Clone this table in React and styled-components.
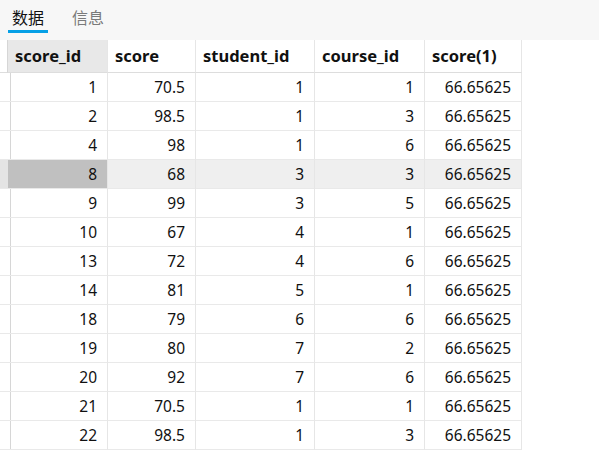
import React from "react";
import styled, { createGlobalStyle } from "styled-components";

const Global = createGlobalStyle`
  html, body { margin: 0; padding: 0; background: #fff; }
  body { font-family: "Noto Sans", "Noto Sans CJK SC", sans-serif; color: #111; }
`;

const TabBar = styled.div`
  height: 40px;
  background: #f7f7f7;
  display: flex;
  align-items: stretch;
  padding-left: 8px;
  gap: 20px;
`;

const Tab = styled.div`
  position: relative;
  width: 40px;
  display: flex;
  justify-content: center;
  padding-top: 7px;
  box-sizing: border-box;
  font-family: "Noto Sans CJK SC", sans-serif;
  font-size: 16px;
  line-height: 20px;
  color: ${(p) => (p.$active ? "#111" : "#7a7a7a")};
  &::after {
    content: "";
    display: ${(p) => (p.$active ? "block" : "none")};
    position: absolute;
    left: 0;
    right: 0;
    top: 30px;
    height: 3px;
    background: #06a0e6;
  }
`;

const Grid = styled.div`
  display: grid;
  grid-template-columns: 8px 100px 88px 119px 110px 97px;
  width: 522px;
`;

const Cell = styled.div`
  box-sizing: border-box;
  height: ${(p) => (p.$head ? "33px" : "29px")};
  border-right: 1px solid ${(p) => (p.$ind ? "#d6d6d6" : "#e6e6e6")};
  border-bottom: 1px solid ${(p) => (p.$head ? "#dddddd" : "#e9e9e9")};
  background: ${(p) => p.$bg || "transparent"};
  display: flex;
  align-items: center;
  justify-content: ${(p) => (p.$head ? "flex-start" : "flex-end")};
  padding: ${(p) => (p.$head ? "0 0 1px 7px" : "0 10px 0 0")};
  font-size: ${(p) => (p.$head ? "16.5px" : "15.5px")};
  font-weight: ${(p) => (p.$head ? 700 : 400)};
  white-space: nowrap;
`;

const headers = ["score_id", "score", "student_id", "course_id", "score(1)"];
const rows = [
  [1, "70.5", 1, 1],
  [2, "98.5", 1, 3],
  [4, "98", 1, 6],
  [8, "68", 3, 3],
  [9, "99", 3, 5],
  [10, "67", 4, 1],
  [13, "72", 4, 6],
  [14, "81", 5, 1],
  [18, "79", 6, 6],
  [19, "80", 7, 2],
  [20, "92", 7, 6],
  [21, "70.5", 1, 1],
  [22, "98.5", 1, 3],
];

export default function App() {
  return (
    <>
      <Global />
      <TabBar>
        <Tab $active>数据</Tab>
        <Tab>信息</Tab>
      </TabBar>
      <Grid>
        <Cell $head $ind />
        {headers.map((h, i) => (
          <Cell key={h} $head $bg={i === 0 ? "#e8e8e8" : undefined}>
            {h}
          </Cell>
        ))}
        {rows.map((r, ri) => {
          const sel = ri === 3;
          const vals = [...r, "66.65625"];
          return (
            <React.Fragment key={ri}>
              <Cell $ind $bg={sel ? "#e4e4e4" : undefined} />
              {vals.map((v, ci) => (
                <Cell
                  key={ci}
                  $bg={sel ? (ci === 0 ? "#c0c0c0" : "#efefef") : undefined}
                >
                  {v}
                </Cell>
              ))}
            </React.Fragment>
          );
        })}
      </Grid>
    </>
  );
}
